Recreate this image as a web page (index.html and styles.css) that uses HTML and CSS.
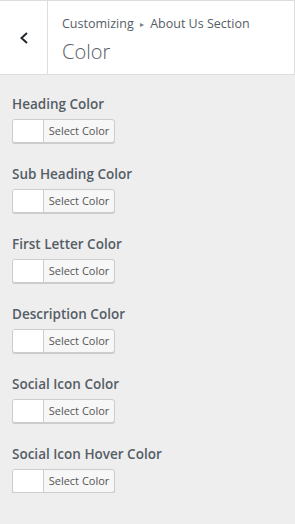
FILE: index.html
```html
<!DOCTYPE html>
<html>
<head>
<meta charset="utf-8">
<link rel="stylesheet" href="styles.css">
</head>
<body>
<div class="header">
  <div class="back">
    <svg width="10" height="12" viewBox="0 0 10 12"><polyline points="8,1 2.5,6 8,11" fill="none" stroke="#23282d" stroke-width="2"/></svg>
  </div>
  <div class="titles">
    <div class="crumb">Customizing <span class="sep">▸</span> About Us Section</div>
    <div class="title">Color</div>
  </div>
</div>
<div class="controls">
  <div class="control"><div class="label">Heading Color</div><div class="picker"><span class="swatch"></span><span class="btn-text">Select Color</span></div></div>
  <div class="control"><div class="label">Sub Heading Color</div><div class="picker"><span class="swatch"></span><span class="btn-text">Select Color</span></div></div>
  <div class="control"><div class="label">First Letter Color</div><div class="picker"><span class="swatch"></span><span class="btn-text">Select Color</span></div></div>
  <div class="control"><div class="label">Description Color</div><div class="picker"><span class="swatch"></span><span class="btn-text">Select Color</span></div></div>
  <div class="control"><div class="label">Social Icon Color</div><div class="picker"><span class="swatch"></span><span class="btn-text">Select Color</span></div></div>
  <div class="control"><div class="label">Social Icon Hover Color</div><div class="picker"><span class="swatch"></span><span class="btn-text">Select Color</span></div></div>
</div>
</body>
</html>
```
FILE: styles.css
```css
html, body {
  margin: 0;
  padding: 0;
  background: #eeeeee;
  font-family: "Open Sans", "Noto Sans", sans-serif;
  color: #555d66;
}
.header {
  display: flex;
  height: 73px;
  background: #fff;
  border-top: 1px solid #dddddd;
  border-bottom: 1px solid #dddddd;
  border-right: 1px solid #dddddd;
}
.back {
  width: 47px;
  border-right: 1px solid #dddddd;
  display: flex;
  align-items: center;
  justify-content: center;
}
.back svg { display: block; }
.titles {
  padding: 14px 0 0 14px;
}
.crumb {
  font-size: 12.5px;
  line-height: 18px;
  color: #555d66;
}
.sep {
  font-size: 8px;
  margin: 0 3px;
  color: #7a8087;
  position: relative;
  top: -1px;
}
.title {
  font-size: 20px;
  font-weight: 300;
  line-height: 26px;
  margin-top: 5px;
  color: #555d66;
}
.controls {
  padding: 19px 12px 0;
  display: flex;
  flex-direction: column;
  gap: 21px;
}
.control {
  display: flex;
  flex-direction: column;
  gap: 5px;
}
.label {
  font-size: 13.5px;
  font-weight: 600;
  line-height: 20px;
  color: #555d66;
}
.picker {
  display: flex;
  width: 101px;
  height: 22px;
  border: 1px solid #cccccc;
  border-radius: 3px;
  background: #f7f7f7;
  box-shadow: 0 1px 0 #cccccc;
  overflow: hidden;
}
.swatch {
  width: 30px;
  background: #ffffff;
  border-right: 1px solid #cccccc;
}
.btn-text {
  flex: 1;
  font-size: 11px;
  line-height: 22px;
  text-align: center;
  color: #555555;
}
```
